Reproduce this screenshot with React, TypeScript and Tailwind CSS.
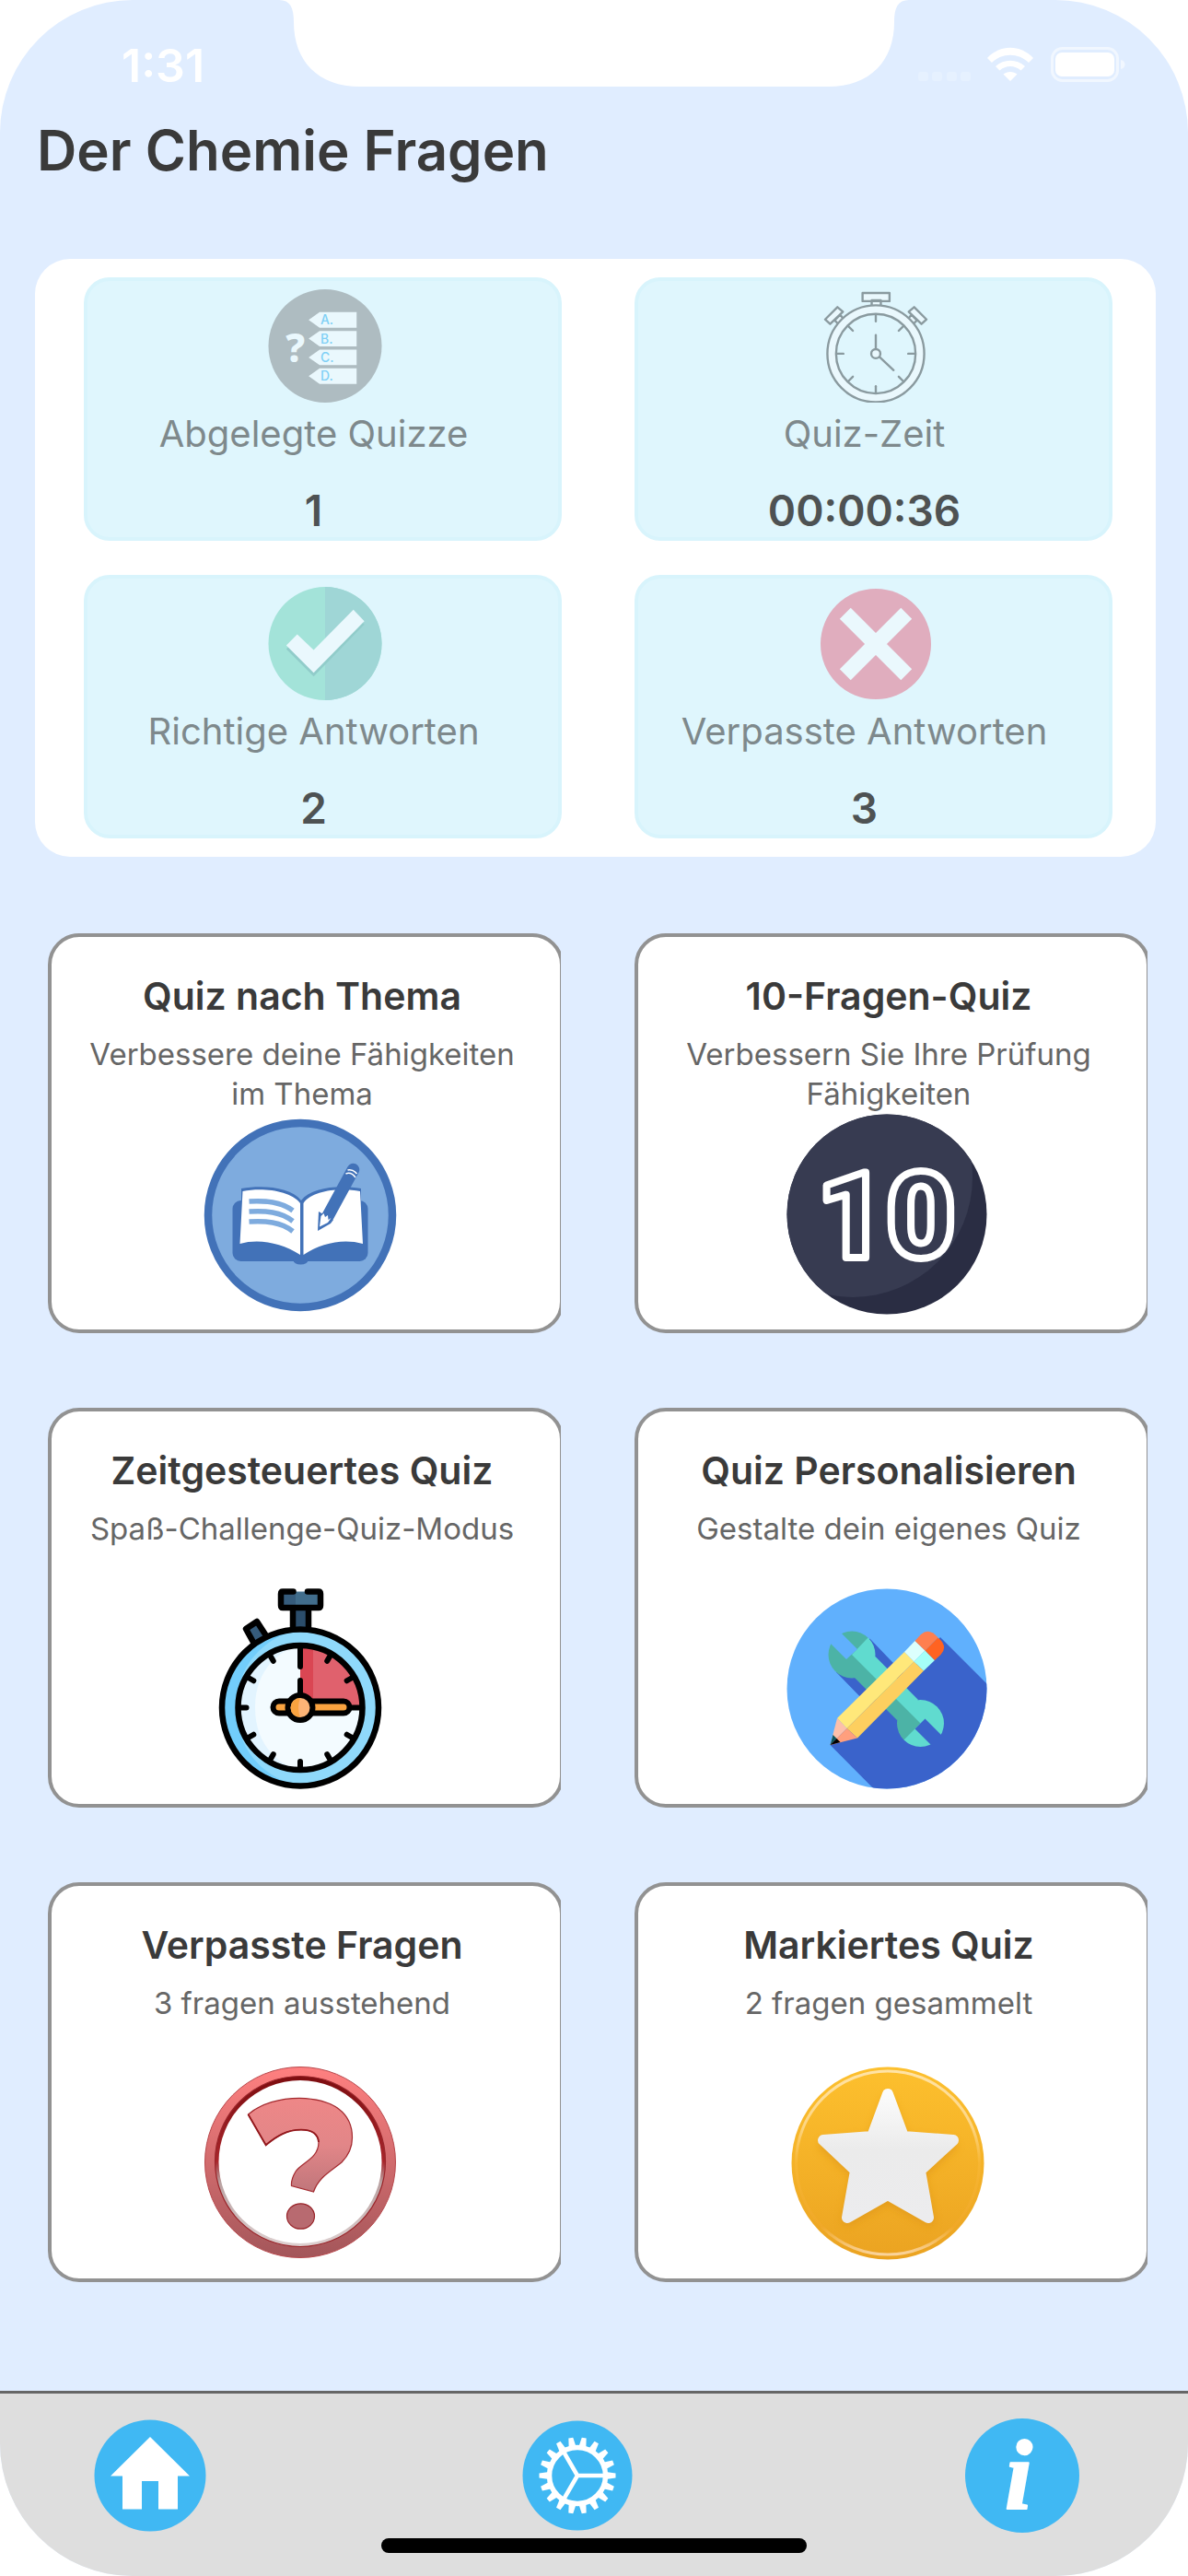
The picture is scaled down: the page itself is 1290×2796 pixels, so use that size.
import type { ReactNode } from "react"

function Notch() {
    return (
        <svg className="h-[94px] w-[684px] shrink-0" viewBox="0 0 684 94" aria-hidden="true">
            <path
                d="M0 0C12 0 16 8 16 24C16 66 42 94 88 94H596C642 94 668 66 668 24C668 8 672 0 684 0Z"
                fill="#fff"
            />
        </svg>
    )
}

function StatusIcons() {
    return (
        <svg className="h-10 w-[226px]" viewBox="0 0 226 40" aria-hidden="true">
            <g fill="#e6f1ff">
                <rect y="28" width="11" height="10" rx="3" />
                <rect x="15" y="28" width="11" height="10" rx="3" />
                <rect x="31" y="28" width="11" height="10" rx="3" />
                <rect x="46" y="28" width="11" height="10" rx="3" />
            </g>
            <path
                d="M100 38L92.500 30.500C96.500 27 103.500 27 107.500 30.500ZM88.500 26.500L84 22C93 13.500 107 13.500 116 22L111.500 26.500C105 20.500 95 20.500 88.500 26.500ZM80 18L75 13C89 -2 111 -2 125 13L120 18C109 7 91 7 80 18Z"
                fill="#fff"
            />
            <rect x="145.500" y="2.500" width="71" height="35" rx="11" fill="none" stroke="#f1f7ff" strokeWidth="3" />
            <rect x="149" y="7" width="64" height="26" rx="7" fill="#fff" />
            <path d="M220 15C226 16 226 24 220 25Z" fill="#f1f7ff" />
        </svg>
    )
}

function AnswersIcon() {
    return (
        <svg className="size-[124px]" viewBox="0 0 124 124" aria-hidden="true">
            <circle cx="62" cy="62" r="62" fill="#aebcc1" />
            <text x="19" y="80" fill="#eaf8fd" fontFamily="Noto Sans, sans-serif" fontWeight="800" fontSize="43">?</text>
            {["A.", "B.", "C.", "D."].map((letter, i) => (
                <g key={letter}>
                    <path d={`M44 ${33.5 + i * 20.5}L56 ${25 + i * 20.5}H96.500V${42 + i * 20.5}H56Z`} fill="#eaf8fd" />
                    <text x="57" y={38.5 + i * 20.5} fill="#7fd0f6" fontFamily="Inter, sans-serif" fontWeight="500" fontSize="14">
                        {letter}
                    </text>
                </g>
            ))}
        </svg>
    )
}

function StopwatchIcon() {
    return (
        <svg className="size-[124px]" viewBox="0 0 124 124" aria-hidden="true">
            <g fill="#eaf8fd" stroke="#8a9a9f" strokeWidth="2.400" strokeLinejoin="round">
                <path d="M57.500 12H67.500V24H57.500ZM47.500 4H77V13H47.500Z" />
                <path d="M101 28L107 34L101 40L95 35ZM104 19.500L117.500 33L112 38L98 24.500Z" />
                <path d="M23 28L17 34L23 40L29 35ZM20 19.500L6.500 33L12 38L26 24.500Z" />
                <circle cx="62" cy="70.500" r="53" />
                <circle cx="62" cy="70.500" r="43.500" fill="#dff6fd" />
            </g>
            <g stroke="#8a9a9f" strokeWidth="2.400" strokeLinecap="round">
                {[0, 45, 90, 135, 180, 225, 270, 315].map((angle) => (
                    <path key={angle} d="M62 28V35" transform={`rotate(${angle} 62 70.5)`} />
                ))}
                <path d="M62 50V65M66 74L81.500 88.500" />
                <circle cx="62" cy="70.500" r="5" fill="#eaf8fd" />
            </g>
        </svg>
    )
}

function CheckIcon() {
    return (
        <svg className="size-[124px]" viewBox="0 0 124 124" aria-hidden="true">
            <circle cx="62" cy="62" r="62" fill="#a3e3d9" />
            <path d="M62 0A62 62 0 0 1 62 124Z" fill="#9fd6d6" />
            <path d="M93 29L105 41L49.500 98L19.500 68L31.500 56L49.500 73Z" fill="#91ccca" />
            <path d="M93 25L105 37.500L49.500 94L19.500 64L31.500 52L49.500 69Z" fill="#eaf8fd" />
        </svg>
    )
}

function CrossIcon() {
    return (
        <svg className="size-[124px]" viewBox="0 0 124 124" aria-hidden="true">
            <circle cx="62" cy="62.500" r="60.500" fill="#e0adbe" />
            <path d="M28.500 29L95.500 96M95.500 29L28.500 96" stroke="#eaf8fd" strokeWidth="17" />
        </svg>
    )
}

function BookIcon() {
    return (
        <svg className="size-[218px]" viewBox="0 0 218 218" aria-hidden="true">
            <circle cx="109" cy="110" r="100" fill="#7eabde" stroke="#4272b8" strokeWidth="8.500" />
            <rect x="35.500" y="94" width="147" height="66" rx="9" fill="#4272b8" />
            <ellipse cx="109.500" cy="159" rx="8" ry="4.500" fill="#4272b8" />
            <path d="M45 81C70 77 99 80 110 94C121 80 150 77 175 81V145H45Z" fill="#4272b8" />
            <path d="M46.500 84C68 80 98 83 109 97V153C89 140 64 135 43.500 141Z" fill="#fff" />
            <path d="M112.500 97C122 83 152 80 174 84L177 141C156 135 132 140 112.500 153Z" fill="#fff" />
            <path
                d="M53.500 95C71 94 88 95 101 105M53.500 106C71 105 88 106 101 116.500M53.500 117C71 116 88 117 101 127.500"
                fill="none"
                stroke="#7eabde"
                strokeWidth="5.500"
            />
            <path d="M166.500 60.500L139 111" stroke="#4272b8" strokeWidth="13.500" strokeLinecap="round" />
            <path d="M129 106L145 115L142 119L128 127Z" fill="#4272b8" />
            <path d="M131.500 111L134.500 108L136 112L139 110L139.500 115L142.500 113L139 118L130 122.500Z" fill="#fff" />
            <path d="M158.500 65C163 63 166 65 169 69M160.500 61C164 60 167 61 170.500 65" fill="none" stroke="#fff" strokeWidth="1.600" />
        </svg>
    )
}

function TenIcon() {
    return (
        <svg className="size-[218px]" viewBox="0 0 218 218" aria-hidden="true">
            <clipPath id="ten-disc">
                <circle cx="109" cy="109" r="108.500" />
            </clipPath>
            <g clipPath="url(#ten-disc)">
                <rect width="218" height="218" fill="#2a2d43" />
                <circle cx="72" cy="69" r="130" fill="#373b51" />
            </g>
            <text
                x="33"
                y="156"
                fill="#373b51"
                stroke="#fff"
                strokeWidth="8"
                strokeLinejoin="round"
                fontFamily="Roboto, sans-serif"
                fontWeight="900"
                fontSize="130"
            >
                10
            </text>
        </svg>
    )
}

function TimerIcon() {
    return (
        <svg className="size-[218px]" viewBox="0 0 218 218" aria-hidden="true">
            <path d="M50 44L62 36L73 53L60 62Z" fill="#365c7c" stroke="#000" strokeWidth="6.500" strokeLinejoin="round" />
            <path d="M101 20H118V46H101Z" fill="#2b4d6b" stroke="#000" strokeWidth="6.500" />
            <rect x="88" y="3.500" width="43" height="18" fill="#416d8c" />
            <rect x="88" y="3.500" width="16" height="18" fill="#365c7c" />
            <path
                d="M101.500 3.500H90Q88 3.500 88 6V18.500Q88 21 90 21H129Q131 21 131 18.500V6Q131 3.500 129 3.500H117"
                fill="none"
                stroke="#000"
                strokeWidth="6.500"
                strokeLinecap="round"
            />
            <circle cx="109" cy="129.500" r="85" fill="#8fd9fb" />
            <path d="M109 44.500A85 85 0 0 0 109 214.500C88 211 40 190 40 129.500S88 48 109 44.500Z" fill="#72cdfb" />
            <circle cx="109" cy="129.500" r="85" fill="none" stroke="#000" strokeWidth="6.500" />
            <circle cx="109" cy="129.500" r="67.500" fill="#f3fbff" />
            <path d="M109 62A67.500 67.500 0 0 0 109 197C88 193 60 172 60 129.500S88 66 109 62Z" fill="#e2f4ff" />
            <path d="M109 129V62A67.500 67.500 0 0 1 176.500 129Z" fill="#e0616d" />
            <path d="M109 129V62Q116 62 123 64V129Z" fill="#da4653" />
            <circle cx="109" cy="129.500" r="67.500" fill="none" stroke="#000" strokeWidth="6.500" />
            <g stroke="#000" strokeWidth="6" strokeLinecap="round">
                {[30, 60, 120, 150, 180, 210, 240, 270, 300, 330].map((angle) => (
                    <path key={angle} d="M109 64V71" transform={`rotate(${angle} 109 129.5)`} />
                ))}
                <path d="M109 64V85M109 100V118M160 129.500H175" />
                <rect x="79.500" y="122.500" width="83" height="13" rx="6.500" fill="#f9a340" />
                <circle cx="109" cy="129.500" r="13.500" fill="#fdb476" />
            </g>
            <path d="M109 119A10.500 10.500 0 0 0 109 140Q105 129 109 119Z" fill="#f9a340" />
        </svg>
    )
}

function ToolsIcon() {
    return (
        <svg className="size-[218px]" viewBox="0 0 218 218" aria-hidden="true">
            <clipPath id="tools-disc">
                <circle cx="109" cy="109" r="108.500" />
            </clipPath>
            <mask id="wrench">
                <circle cx="71" cy="72" r="25.500" fill="#fff" />
                <circle cx="145.500" cy="146.500" r="25.500" fill="#fff" />
                <path d="M96.500 74L143 121L120 143L74 97Z" fill="#fff" />
                <path d="M77 66L65 77L40 52L52 41ZM150.500 141.500L139.500 152.500L165 178L176 167Z" fill="#000" />
            </mask>
            <g clipPath="url(#tools-disc)">
                <rect width="218" height="218" fill="#60b0fd" />
                <path d="M167 53L240 126V240H117L47.500 170L90 128L54 91L90 54L114 79L130 95Z" fill="#3a63cb" />
                <path d="M91 54L54 91L47 72L71 46Z" fill="#60b0fd" />
                <g mask="url(#wrench)">
                    <rect width="218" height="218" fill="#4cb3a6" />
                    <path d="M90 52L71 72L145.500 146.500L126 166V200H200V50Z" fill="#60dbcf" />
                </g>
            </g>
            <path d="M128 69L138.500 79.500L65.500 152L55 141Z" fill="#ffe87a" />
            <path d="M138.500 79.500L149 89.500L77 162.500L65.500 152Z" fill="#fdcf5f" />
            <path d="M139.500 57L128 69L138.500 79.500L150.500 67.500Z" fill="#dcfffd" />
            <path d="M150.500 67.500L161 78L149 89.500L138.500 79.500Z" fill="#a5fff8" />
            <path d="M139.500 57L146 50Q155 42 164.500 53.500L150.500 67.500Z" fill="#fe7f4f" />
            <path d="M164.500 53.500Q176 63 167.500 72L161 78L150.500 67.500Z" fill="#ff6322" />
            <path d="M55 141L65.500 152L47.500 170Z" fill="#fdbfaa" />
            <path d="M65.500 152L77 162.500L47.500 170Z" fill="#ff9f7d" />
            <path d="M50.500 159L54.500 163L47.500 170Z" fill="#0b5560" />
            <path d="M54.500 163L58.500 167L47.500 170Z" fill="#000" />
        </svg>
    )
}

function MissedIcon() {
    return (
        <svg className="size-[218px]" viewBox="0 0 218 218" aria-hidden="true">
            <defs>
                <linearGradient id="missed-ring" x1="0" y1="0" x2="0" y2="1">
                    <stop offset="0" stopColor="#ff8080" />
                    <stop offset="1" stopColor="#a3565a" />
                </linearGradient>
                <linearGradient id="missed-rim" x1="0" y1="0" x2="0" y2="1">
                    <stop offset="0" stopColor="#7d0d10" />
                    <stop offset="0.500" stopColor="#a8262b" />
                    <stop offset="0.620" stopColor="#b9a2a2" />
                    <stop offset="1" stopColor="#ddd0d0" />
                </linearGradient>
                <linearGradient id="missed-mark" x1="0" y1="0" x2="0" y2="1">
                    <stop offset="0" stopColor="#ee8787" />
                    <stop offset="0.500" stopColor="#e28688" />
                    <stop offset="1" stopColor="#c0767b" />
                </linearGradient>
            </defs>
            <circle cx="109" cy="108" r="103.500" fill="url(#missed-ring)" stroke="#b8484c" strokeWidth="1" />
            <circle cx="109" cy="107" r="92.500" fill="url(#missed-rim)" stroke="#99252a" strokeWidth="1.200" />
            <circle cx="109" cy="107.500" r="88.500" fill="#fff" />
            <path
                d="M52.500 56C66 44 88 38.300 108 38.300C146 39 165.500 55 165.500 81C165.500 93 161 101 154 108C142 118 129 124 123.500 140L99.500 133.500C99 128 101 123 104 118C111 108 129 104 129 86C128 76 121 72.700 110 72.700C95 72.700 84 79 71.700 89.300Z"
                fill="url(#missed-mark)"
                stroke="#a32a2f"
                strokeWidth="1.200"
            />
            <path d="M52.500 56L71.700 89.300C84 79 95 72.700 110 72.700C121 72.700 128 76 129 86" fill="none" stroke="#93181c" strokeWidth="1.800" />
            <ellipse cx="109.500" cy="166.500" rx="15" ry="13.700" fill="#b86a70" stroke="#99252a" strokeWidth="1.200" />
        </svg>
    )
}

function StarIcon() {
    return (
        <svg className="size-[218px]" viewBox="0 0 218 218" aria-hidden="true">
            <defs>
                <linearGradient id="star-disc" x1="0" y1="0" x2="0" y2="1">
                    <stop offset="0" stopColor="#fdc02e" />
                    <stop offset="1" stopColor="#eba321" />
                </linearGradient>
                <linearGradient id="star-shine" x1="0" y1="0" x2="0" y2="1">
                    <stop offset="0" stopColor="#ffe3a6" />
                    <stop offset="0.300" stopColor="#fdd582" />
                    <stop offset="0.500" stopColor="#f7b632" />
                    <stop offset="0.850" stopColor="#f0a828" />
                    <stop offset="1" stopColor="#fad39a" />
                </linearGradient>
                <linearGradient id="star-body" x1="0" y1="0" x2="0" y2="1">
                    <stop offset="0" stopColor="#fbfbfb" />
                    <stop offset="0.450" stopColor="#ebebeb" />
                    <stop offset="1" stopColor="#ececee" />
                </linearGradient>
                <filter id="star-shadow" x="-20%" y="-20%" width="140%" height="140%">
                    <feGaussianBlur stdDeviation="4" />
                </filter>
            </defs>
            <circle cx="110" cy="109" r="104.500" fill="url(#star-disc)" />
            <circle cx="110" cy="108.500" r="99.500" fill="none" stroke="url(#star-shine)" strokeWidth="3" />
            <path
                d="M110 42L127 84L179 90L145 121L155 171L110 148L66 171L76 121L41 90L93 84Z"
                fill="#d98f12"
                stroke="#d98f12"
                strokeWidth="12"
                strokeLinejoin="round"
                opacity="0.500"
                filter="url(#star-shadow)"
            />
            <path
                d="M110 34L127 80L181 84L145 117L154 168L110 143L66 168L75 117L40 84L93 80Z"
                fill="url(#star-body)"
                stroke="url(#star-body)"
                strokeWidth="12"
                strokeLinejoin="round"
            />
        </svg>
    )
}

function HomeIcon() {
    return (
        <svg className="size-[124px]" viewBox="0 0 124 124" aria-hidden="true">
            <circle cx="62" cy="62" r="60.500" fill="#40b8f3" />
            <path d="M62 20L105 62.500H92V98.500H71V68H53V98.500H32V62.500H19Z" fill="#fff" />
        </svg>
    )
}

function GearIcon() {
    const teeth = Array.from({ length: 18 }, (_, i) => i * 20)
    return (
        <svg className="size-[124px]" viewBox="0 0 124 124" aria-hidden="true">
            <circle cx="62" cy="62" r="59.500" fill="#40b8f3" />
            <circle cx="62" cy="62" r="30.500" fill="none" stroke="#fff" strokeWidth="5.500" />
            {teeth.map((angle) => (
                <path key={angle} d="M93 58L103.500 59.500V64.500L93 66Z" fill="#fff" transform={`rotate(${angle} 62 62)`} />
            ))}
            <path d="M62 62H91M62 62L47.500 37M62 62L47.500 87" stroke="#fff" strokeWidth="4.500" />
        </svg>
    )
}

function InfoIcon() {
    return (
        <svg className="size-[124px]" viewBox="0 0 124 124" aria-hidden="true">
            <circle cx="62" cy="62" r="62" fill="#40b8f3" />
            <text
                x="43"
                y="98"
                fill="#fff"
                stroke="#fff"
                strokeWidth="2"
                strokeLinejoin="round"
                fontFamily="Liberation Serif, serif"
                fontStyle="italic"
                fontWeight="700"
                fontSize="108"
            >
                i
            </text>
        </svg>
    )
}

const stats = [
    { label: "Abgelegte Quizze", value: "1", icon: <AnswersIcon /> },
    { label: "Quiz-Zeit", value: "00:00:36", icon: <StopwatchIcon /> },
    { label: "Richtige Antworten", value: "2", icon: <CheckIcon /> },
    { label: "Verpasste Antworten", value: "3", icon: <CrossIcon /> },
]

const quizzes = [
    { title: "Quiz nach Thema", text: "Verbessere deine Fähigkeiten im Thema", icon: <BookIcon /> },
    { title: "10-Fragen-Quiz", text: "Verbessern Sie Ihre Prüfung Fähigkeiten", icon: <TenIcon /> },
    { title: "Zeitgesteuertes Quiz", text: "Spaß-Challenge-Quiz-Modus", icon: <TimerIcon /> },
    { title: "Quiz Personalisieren", text: "Gestalte dein eigenes Quiz", icon: <ToolsIcon /> },
    { title: "Verpasste Fragen", text: "3 fragen ausstehend", icon: <MissedIcon /> },
    { title: "Markiertes Quiz", text: "2 fragen gesammelt", icon: <StarIcon /> },
]

function StatCard({ label, value, icon }: { label: string; value: string; icon: ReactNode }) {
    return (
        <div className="flex h-[286px] flex-col items-center rounded-[28px] border-4 border-[#d8f4fc] bg-[#dff6fd] pt-[9px] pl-1">
            {icon}
            <div className="mt-2 pr-6 text-center whitespace-nowrap">
                <p className="text-[40px] leading-[52px] text-[#7e898c]">{label}</p>
                <p className="mt-7 text-[46px] leading-[58px] font-semibold text-[#4e5253]">{value}</p>
            </div>
        </div>
    )
}

function QuizCard({ title, text, icon }: { title: string; text: string; icon: ReactNode }) {
    return (
        // the right border is cut off by the clipped wrapper
        <div className="overflow-hidden">
            <button
                type="button"
                className="-mr-[3px] flex w-[calc(100%+3px)] flex-col items-center rounded-[34px] border-4 border-[#929292] bg-white px-7 pt-[38px] pb-4"
            >
                <span className="pr-2 text-[41px] leading-[52px] font-semibold whitespace-nowrap text-[#3a3a3a]">{title}</span>
                <span className="mt-4 h-[86px] pr-2 text-[33px] leading-[43px] text-[#666666]">{text}</span>
                <span className="pr-3">{icon}</span>
            </button>
        </div>
    )
}

export default function App() {
    return (
        <div className="bg-white font-['Inter',sans-serif]">
            <div className="flex min-h-screen flex-col overflow-hidden rounded-[144px] bg-[#e0edff]">
                <div className="grid grid-cols-[1fr_auto_1fr]">
                    <div className="pt-[42px] pl-[132px] text-[50px] leading-[58px] font-semibold text-white">1:31</div>
                    <Notch />
                    <div className="flex justify-end pt-[50px] pr-[67px]">
                        <StatusIcons />
                    </div>
                </div>

                <h1 className="mt-6 px-10 text-[60px] leading-[78px] font-semibold text-[#3a3a3a]">Der Chemie Fragen</h1>

                <section className="mt-[79px] mr-[35px] ml-[38px] grid grid-cols-2 gap-x-[79px] gap-y-[37px] rounded-[38px] bg-white py-5 pr-[47px] pl-[53px]">
                    {stats.map((stat) => (
                        <StatCard key={stat.label} {...stat} />
                    ))}
                </section>

                <main className="mt-[83px] mb-[118px] grid grid-cols-2 gap-x-20 gap-y-[81px] pr-11 pl-[52px]">
                    {quizzes.map((quiz) => (
                        <QuizCard key={quiz.title} {...quiz} />
                    ))}
                </main>

                <footer className="mt-auto border-t-[3px] border-[#666666] bg-[#dedede] pt-[27px] pb-[25px]">
                    <nav className="flex justify-between pr-[118px] pl-[101px]">
                        <button type="button" aria-label="Startseite" className="size-[124px]">
                            <HomeIcon />
                        </button>
                        <button type="button" aria-label="Einstellungen" className="mr-5 size-[124px]">
                            <GearIcon />
                        </button>
                        <button type="button" aria-label="Info" className="size-[124px]">
                            <InfoIcon />
                        </button>
                    </nav>
                    <div className="mx-auto mt-[6px] h-4 w-[462px] rounded-full bg-black" />
                </footer>
            </div>
        </div>
    )
}
